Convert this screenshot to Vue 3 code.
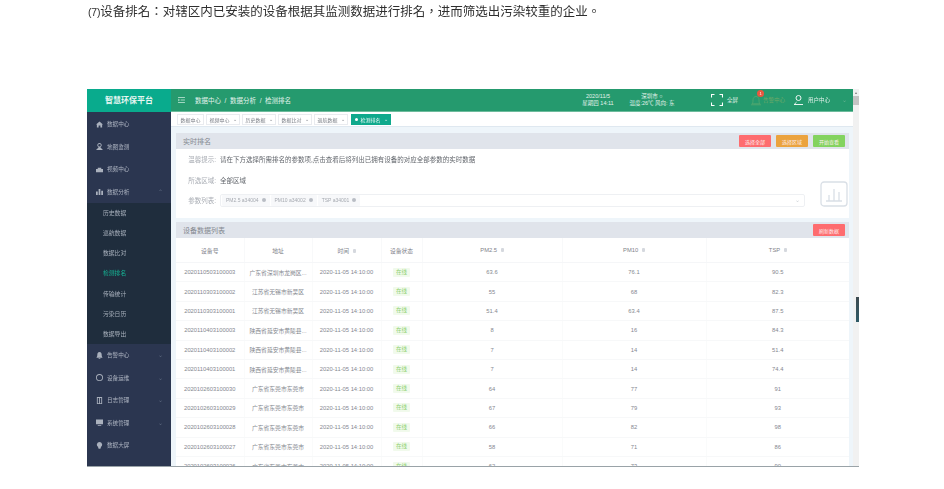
<template>
  <div class="page">
    <p class="intro"><span class="intro__no">(7)</span>设备排名：对辖区内已安装的设备根据其监测数据进行排名，进而筛选出污染较重的企业。</p>

    <div class="shot">
      <div class="app">
        <!-- 顶部 -->
        <header class="topbar">
          <div class="logo">智慧环保平台</div>
          <div class="topbar__main">
            <svg class="hamburger" viewBox="0 0 8 7" fill="none" stroke="#dff3ea" stroke-width="0.8">
              <path d="M0 .6h8M3 3.5h5M0 6.4h8M0 2.4l1.6 1.1L0 4.6" />
            </svg>
            <span class="crumbs">数据中心&nbsp; /&nbsp; 数据分析&nbsp; /&nbsp; 检测排名</span>
            <div class="info info--date">
              <span>2020/11/5</span>
              <span>星期四 14:11</span>
            </div>
            <div class="info info--weather">
              <span>深圳市 ○</span>
              <span>温度:26℃ 风向: 东</span>
            </div>
            <svg class="icon-full" viewBox="0 0 12 12" fill="none" stroke="#fff" stroke-width="1.1">
              <path d="M0.5 3.5V.5h3M8.500 .5h3v3M11.500 8.500v3h-3M3.500 11.500h-3v-3" />
            </svg>
            <span class="top-label top-label--full">全屏</span>
            <div class="bell">
              <svg viewBox="0 0 10 11" fill="none" stroke="#57a970" stroke-width="0.8">
                <path d="M1 8.800c1-1 1-2 1-4 0-2 1.300-3.300 3-3.300s3 1.300 3 3.300c0 2 0 3 1 4zM0 9.800h10" />
              </svg>
              <span class="bell__badge">1</span>
            </div>
            <span class="top-label top-label--alarm">告警中心</span>
            <svg class="icon-user" viewBox="0 0 9 10" fill="none" stroke="#fff" stroke-width="0.9">
              <circle cx="4.500" cy="3" r="2.500" />
              <path d="M0 9.500h9M1 9.500c0-1.500 1-2 1.500-2.300" />
            </svg>
            <span class="top-label top-label--user">用户中心</span>
            <span class="caret">⌄</span>
          </div>
        </header>

        <div class="body">
          <!-- 侧边栏 -->
          <aside class="sidebar">
            <template v-for="item in menu" :key="item.name">
              <div class="menu-item">
                <svg class="menu-item__icon" viewBox="0 0 8 8" fill="#aab1bd">
                  <path :d="item.icon" />
                </svg>
                <span>{{ item.name }}</span>
                <span v-if="item.arrow" class="menu-item__arrow">{{ item.arrow }}</span>
              </div>
              <div v-if="item.children" class="submenu">
                <div v-for="sub in item.children" :key="sub"
                  :class="['submenu__item', { 'submenu__item--active': sub === '检测排名' }]">
                  {{ sub }}
                </div>
              </div>
            </template>
          </aside>

          <main class="content">
            <nav class="tabs">
              <span v-for="tab in tabs" :key="tab.name" :class="['tab', { 'tab--active': tab.active }]">
                <i v-if="tab.active" class="tab__dot"></i>
                {{ tab.name }}
                <i v-if="tab.arrow" class="tab__arrow">⌄</i>
              </span>
            </nav>

            <div class="panels">
              <!-- 实时排名 -->
              <section class="card card--filter">
                <div class="card__head">
                  <span>实时排名</span>
                  <div class="card__btns">
                    <button class="btn btn--red">选择全部</button>
                    <button class="btn btn--orange">选择区域</button>
                    <button class="btn btn--green">开始查看</button>
                  </div>
                </div>
                <div class="filter">
                  <div class="filter__row">
                    <label>温馨提示:</label>
                    <span class="filter__value">请在下方选择所需排名的参数项,点击查看后将列出已拥有设备的对应全部参数的实时数据</span>
                  </div>
                  <div class="filter__row">
                    <label>所选区域:</label>
                    <span class="filter__value">全部区域</span>
                  </div>
                  <div class="filter__row">
                    <label>参数列表:</label>
                    <div class="select">
                      <span v-for="p in params" :key="p" class="chip">{{ p }} <i class="chip__x"></i></span>
                      <span class="select__arrow">⌄</span>
                    </div>
                    <svg class="chart-icon" viewBox="0 0 28 26" fill="none" stroke="#d9dfe6" stroke-width="1.300">
                      <rect x="1" y="1" width="26" height="24" rx="3" />
                      <path d="M6 20h16M9 20v-6M14 20V8M19 20v-9" />
                    </svg>
                  </div>
                </div>
              </section>

              <!-- 设备数据列表 -->
              <section class="card">
                <div class="card__head card__head--list">
                  <span>设备数据列表</span>
                  <button class="btn btn--red">刷新数据</button>
                </div>
                <table class="grid">
                  <colgroup>
                    <col style="width: 68px" />
                    <col style="width: 68px" />
                    <col style="width: 69px" />
                    <col style="width: 41px" />
                    <col style="width: 140px" />
                    <col style="width: 144px" />
                    <col />
                  </colgroup>
                  <thead>
                    <tr>
                      <th>设备号</th>
                      <th>地址</th>
                      <th>时间 <i class="sort"></i></th>
                      <th>设备状态</th>
                      <th>PM2.5 <i class="sort"></i></th>
                      <th>PM10 <i class="sort"></i></th>
                      <th>TSP <i class="sort"></i></th>
                    </tr>
                  </thead>
                  <tbody>
                    <tr v-for="row in rows" :key="row[0]">
                      <td>{{ row[0] }}</td>
                      <td>{{ row[1] }}</td>
                      <td>2020-11-05 14:10:00</td>
                      <td><span class="tag">在线</span></td>
                      <td>{{ row[2] }}</td>
                      <td>{{ row[3] }}</td>
                      <td>{{ row[4] }}</td>
                    </tr>
                  </tbody>
                </table>
              </section>
            </div>
          </main>
        </div>
      </div>
      <div class="scrollbar">
        <span class="scrollbar__up"></span>
        <span class="scrollbar__thumb"></span>
      </div>
      <span class="side-thumb"></span>
    </div>
  </div>
</template>

<script setup>
const menu = [
  { name: '数据中心', icon: 'M4 .5 8 4H7v3.500H5V5H3v2.500H1V4H0z' },
  { name: '地图监测', icon: 'M4 0a2.500 2.500 0 0 1 1 4.800L6 6l2 2H0l2-2 1-1.200A2.500 2.500 0 0 1 4 0zm0 1a1.500 1.500 0 1 0 0 3 1.500 1.500 0 0 0 0-3z' },
  { name: '视频中心', icon: 'M2 2h4v1.500h2V7H0V3.500h2z' },
  {
    name: '数据分析', arrow: '⌃', icon: 'M0 4h2v4H0zM3 1h2v7H3zM6 3h2v5H6z',
    children: ['历史数据', '巡航数据', '数据比对', '检测排名', '传输统计', '污染日历', '数据导出']
  },
  { name: '告警中心', arrow: '⌄', icon: 'M4 0c2 0 2.500 1.500 2.500 3.500 0 1.500.5 2 1 3H.5c.5-1 1-1.500 1-3C1.500 1.500 2 0 4 0zM3 7h2v1H3z' },
  { name: '设备运维', arrow: '⌄', icon: 'M4 0a4 4 0 1 0 0 8 4 4 0 0 0 0-8zm0 1a3 3 0 1 1 0 6 3 3 0 0 1 0-6z' },
  { name: '日志管理', arrow: '⌄', icon: 'M1 0h6v8H1zm1 1v6h1.500V1zm2.500 0v6H6V1z' },
  { name: '系统管理', arrow: '⌄', icon: 'M0 .5h8v5.500H0zM2 7h4v1H2z' },
  { name: '数据大屏', icon: 'M4 0a3 3 0 0 1 1.500 5.600V7h-3V5.600A3 3 0 0 1 4 0zM3 7.300h2V8H3z' }
]

const tabs = [
  { name: '数据中心' },
  { name: '视频中心', arrow: true },
  { name: '历史数据', arrow: true },
  { name: '数据比对', arrow: true },
  { name: '巡航数据', arrow: true },
  { name: '检测排名', arrow: true, active: true }
]

const params = ['PM2.5 a34004', 'PM10 a34002', 'TSP a34001']

const rows = [
  ['2020110503100003', '广东省深圳市龙岗区...', '63.6', '76.1', '90.5'],
  ['2020110303100002', '江苏省无锡市新吴区', '55', '68', '82.3'],
  ['2020110303100001', '江苏省无锡市新吴区', '51.4', '63.4', '87.5'],
  ['2020110403100003', '陕西省延安市黄陵县...', '8', '16', '84.3'],
  ['2020110403100002', '陕西省延安市黄陵县...', '7', '14', '51.4'],
  ['2020110403100001', '陕西省延安市黄陵县...', '7', '14', '74.4'],
  ['2020102603100030', '广东省东莞市东莞市', '64', '77', '91'],
  ['2020102603100029', '广东省东莞市东莞市', '67', '79', '93'],
  ['2020102603100028', '广东省东莞市东莞市', '66', '82', '98'],
  ['2020102603100027', '广东省东莞市东莞市', '58', '71', '86'],
  ['2020102603100026', '广东省东莞市东莞市', '62', '73', '90']
]
</script>

<style>
html, body { background: #fff; overflow: hidden; }
</style>

<style scoped>
.page {
  width: 944px;
  height: 489px;
  overflow: hidden;
  font-family: "Liberation Sans", "Noto Sans CJK SC", sans-serif;
}
.intro {
  margin: 0;
  padding: 4px 0 0 88px;
  height: 89px;
  box-sizing: border-box;
  font-family: "Liberation Sans", "Noto Sans CJK TC", sans-serif;
  font-size: 12.500px;
  line-height: 16px;
  color: #2f2f2f;
  filter: blur(0.3px);
}
.intro__no { font-size: 10.500px; letter-spacing: -0.2px; }
.shot {
  position: relative;
  display: flex;
  width: 772px;
  height: 378px;
  margin-left: 87px;
  border-bottom: 1px solid #9aa3a8;
  box-sizing: border-box;
  overflow: visible;
}
.app {
  flex: 1;
  min-width: 0;
  height: 377px;
  display: flex;
  flex-direction: column;
  overflow: hidden;
  filter: blur(0.5px);
}

/* top */
.topbar { display: flex; height: 23px; flex: none; }
.logo {
  width: 84px;
  background: #09ab8d;
  color: #e8f7f3;
  font-size: 8px;
  font-weight: 700;
  text-align: center;
  line-height: 23px;
}
.topbar__main {
  flex: 1;
  display: flex;
  align-items: center;
  background: #259a6e;
  border-bottom: 1px solid #6dbb9c;
  box-sizing: border-box;
  color: #e4f3ec;
  padding-left: 7px;
}
.hamburger { width: 7px; height: 6px; flex: none; }
.crumbs { font-size: 6.500px; margin-left: 10px; width: 380px; flex: none; white-space: nowrap; }
.info {
  display: flex;
  flex-direction: column;
  align-items: center;
  font-size: 5.500px;
  line-height: 7px;
  flex: none;
  white-space: nowrap;
}
.info--date { width: 40px; margin-left: 3px; }
.info--weather { width: 50px; margin-left: 9px; }
.icon-full { width: 12px; height: 12px; margin-left: 34px; flex: none; }
.top-label { font-size: 5.500px; white-space: nowrap; flex: none; }
.top-label--full { margin-left: 4px; width: 10px; }
.bell { position: relative; width: 10px; height: 11px; margin-left: 14px; flex: none; }
.bell svg { width: 10px; height: 11px; display: block; }
.bell__badge {
  position: absolute;
  top: -5px;
  left: 6px;
  width: 7px;
  height: 7px;
  border-radius: 50%;
  background: #e9573f;
  color: #fff;
  font-size: 4px;
  line-height: 7px;
  text-align: center;
}
.top-label--alarm { margin-left: 2px; color: #6fa968; width: 22px; font-size: 5.500px; }
.icon-user { width: 9px; height: 10px; margin-left: 9px; flex: none; }
.top-label--user { margin-left: 5px; width: 24px; }
.caret { margin-left: 10px; font-size: 6px; color: #68b292; line-height: 6px; }

/* sidebar */
.body { flex: 1; display: flex; min-height: 0; }
.sidebar {
  width: 84px;
  flex: none;
  background: #2b3650;
  padding-top: 1px;
}
.menu-item {
  height: 22.500px;
  display: flex;
  align-items: center;
  padding-left: 9px;
  font-size: 5.600px;
  color: #aeb5c2;
}
.menu-item__icon { width: 7px; height: 7px; margin-right: 4px; flex: none; }
.menu-item__arrow { margin-left: auto; margin-right: 8px; font-size: 6px; color: #5f6a80; line-height: 6px; }
.submenu { background: #1f2d3d; }
.submenu__item {
  height: 20.150px;
  line-height: 20.150px;
  padding-left: 16px;
  font-size: 5.800px;
  color: #a8b0bc;
}
.submenu__item--active { color: #16b394; }

/* content */
.content {
  flex: 1;
  min-width: 0;
  display: flex;
  flex-direction: column;
  background: #eef5fa;
}
.tabs {
  height: 15px;
  flex: none;
  box-sizing: border-box;
  display: flex;
  align-items: flex-start;
  gap: 2px;
  padding: 2px 0 0 6px;
  background: #fff;
  border-bottom: 1px solid #dfe8f0;
}
.tab {
  height: 11px;
  padding: 0 2.500px;
  display: flex;
  align-items: center;
  gap: 3px;
  box-sizing: border-box;
  border: 1px solid #e9ebef;
  font-size: 5px;
  color: #7a7e86;
  white-space: nowrap;
}
.tab i { font-style: normal; }
.tab__arrow { font-size: 5px; line-height: 5px; }
.tab--active { background: #0fa98c; border-color: #0fa98c; color: #e9f8f4; margin-left: 1px; }
.tab__dot { width: 3px; height: 3px; border-radius: 50%; background: #fff; }
.panels {
  flex: 1;
  min-height: 0;
  overflow: hidden;
  padding: 6px 4px 0 5px;
  display: flex;
  flex-direction: column;
  gap: 4px;
}
.card { background: #fff; flex: none; }
.card--filter { height: 85px; }
.card__head {
  height: 16px;
  display: flex;
  align-items: center;
  justify-content: space-between;
  padding: 0 4px 0 7px;
  background: #e0e4eb;
  font-size: 7px;
  color: #83888f;
}
.card__btns { display: flex; gap: 5px; }
.btn {
  width: 32px;
  height: 12px;
  padding: 0;
  border: none;
  border-radius: 1px;
  font-family: inherit;
  font-size: 5px;
  color: #fdeeee;
}
.btn--red { background: #fe6c6f; }
.btn--orange { background: #eba33e; }
.btn--green { background: #83d35f; }
.filter__row {
  height: 20.500px;
  display: flex;
  align-items: center;
  position: relative;
  font-size: 6.500px;
}
.filter__row label { width: 40px; text-align: right; color: #a9adb4; flex: none; }
.filter__value { margin-left: 4px; color: #62666c; white-space: nowrap; }
.select {
  margin-left: 4px;
  width: 585px;
  height: 13px;
  box-sizing: border-box;
  border: 1px solid #eef0f3;
  border-radius: 2px;
  display: flex;
  align-items: center;
  padding-left: 1px;
  gap: 1px;
}
.chip {
  height: 11px;
  display: inline-flex;
  align-items: center;
  gap: 3px;
  padding: 0 4px;
  background: #f7f8fa;
  border-radius: 1px;
  font-size: 5px;
  color: #a6aab1;
  white-space: nowrap;
}
.chip__x { width: 4px; height: 4px; border-radius: 50%; background: #b9bdc4; }
.select__arrow { margin-left: auto; margin-right: 4px; font-size: 6px; line-height: 6px; color: #ccd0d6; }
.chart-icon { position: absolute; left: 644px; top: -9px; width: 28px; height: 26px; }

.card__head--list { padding-right: 4px; }
.grid {
  width: 100%;
  table-layout: fixed;
  border-collapse: collapse;
  font-size: 5.800px;
  color: #85888f;
}
.grid th {
  height: 24px;
  padding: 0;
  font-weight: 400;
  border-bottom: 1px solid #f5f6f8;
  border-right: 1px solid #f8f9fa;
  color: #7f838a;
}
.grid th:last-child, .grid td:last-child { border-right: none; }
.grid td {
  height: 19.400px;
  padding: 0;
  text-align: center;
  white-space: nowrap;
  border-bottom: 1px solid #f7f8f9;
  border-right: 1px solid #fafbfb;
  box-sizing: border-box;
}
.sort {
  display: inline-block;
  width: 3px;
  height: 4px;
  margin-left: 2px;
  border-radius: 1px;
  background: #d5d8de;
}
.tag {
  display: inline-block;
  height: 9px;
  line-height: 9px;
  padding: 0 3px;
  background: #f1faec;
  border-radius: 1px;
  font-size: 5.500px;
  color: #8fd070;
}

/* scrollbar */
.scrollbar {
  width: 6px;
  flex: none;
  height: 377px;
  background: #f1f1f1;
  position: relative;
}
.scrollbar__up {
  position: absolute;
  top: 2px;
  left: 1.500px;
  border: 1.500px solid transparent;
  border-bottom: 2px solid #777;
}
.scrollbar__thumb {
  position: absolute;
  top: 7px;
  left: 0;
  width: 6px;
  height: 9px;
  background: #c4c4c4;
}
.side-thumb {
  position: absolute;
  top: 208px;
  left: 769px;
  width: 3px;
  height: 25px;
  background: linear-gradient(#3d4a50, #2e5a66);
}
</style>
